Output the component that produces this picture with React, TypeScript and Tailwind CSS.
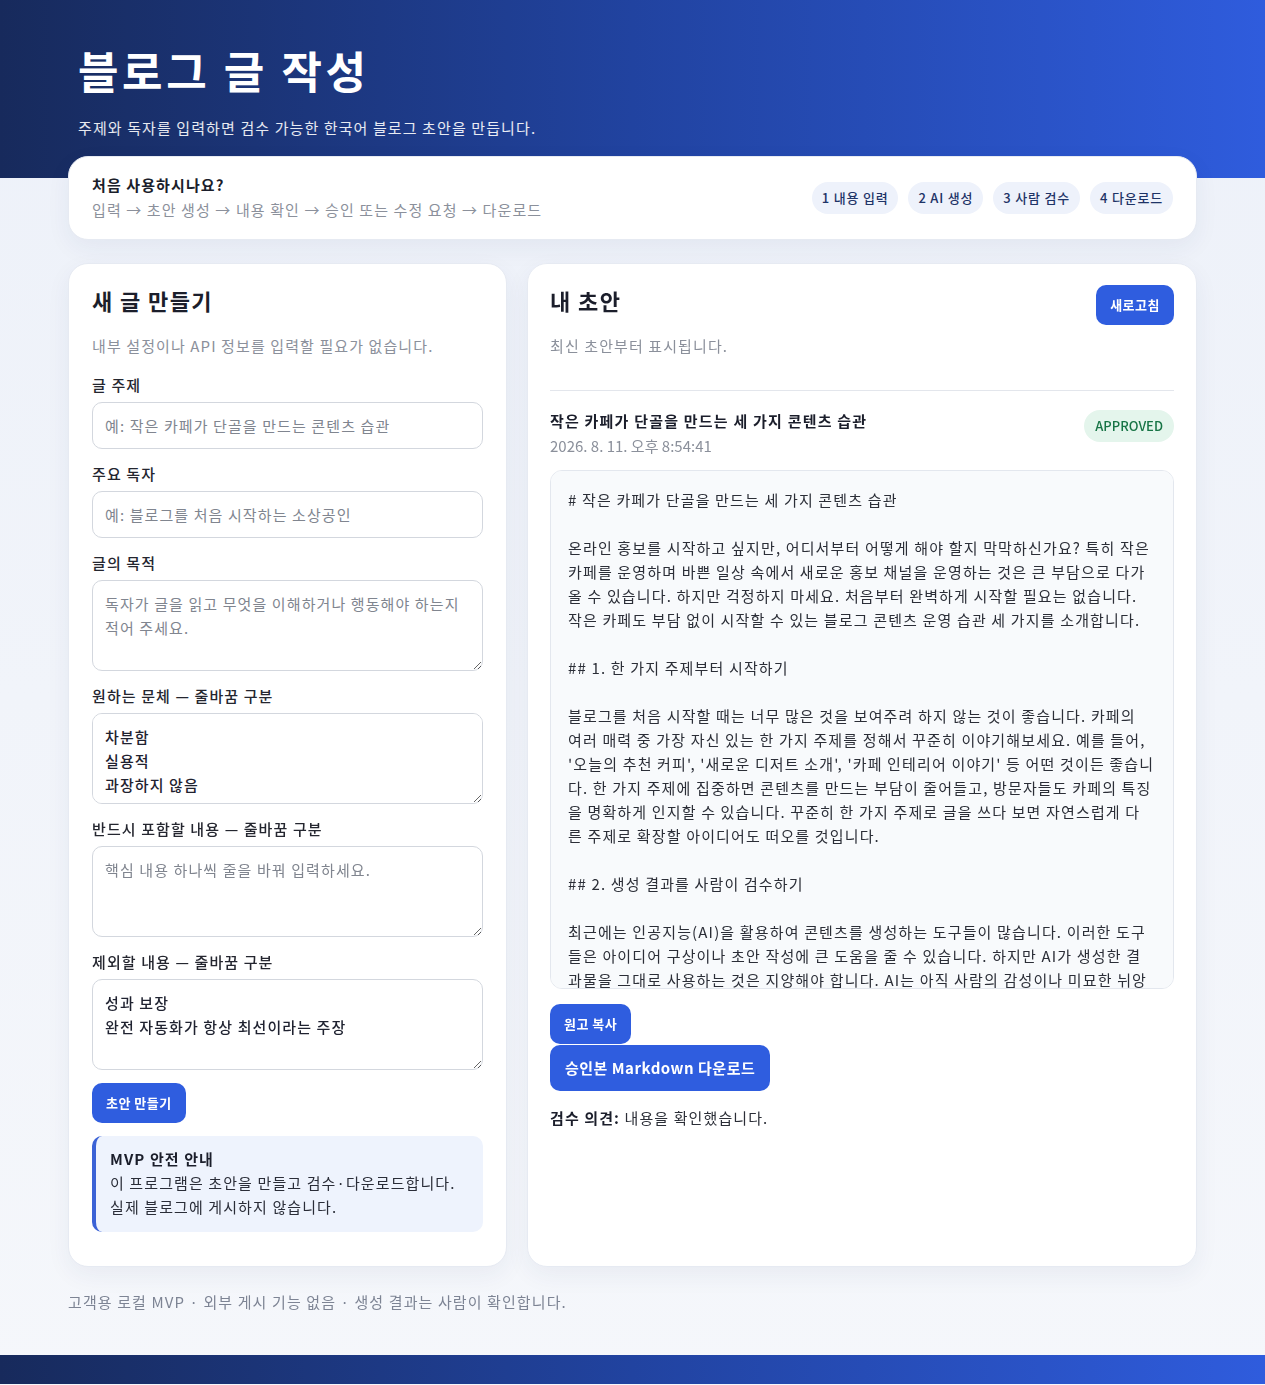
import React from 'react';

// 미리보기 박스는 원본과 같은 줄바꿈을 유지하기 위해 줄 단위로 적어둔다
const draftLines = [
  '# 작은 카페가 단골을 만드는 세 가지 콘텐츠 습관',
  '',
  '온라인 홍보를 시작하고 싶지만, 어디서부터 어떻게 해야 할지 막막하신가요? 특히 작은',
  '카페를 운영하며 바쁜 일상 속에서 새로운 홍보 채널을 운영하는 것은 큰 부담으로 다가',
  '올 수 있습니다. 하지만 걱정하지 마세요. 처음부터 완벽하게 시작할 필요는 없습니다.',
  '작은 카페도 부담 없이 시작할 수 있는 블로그 콘텐츠 운영 습관 세 가지를 소개합니다.',
  '',
  '## 1. 한 가지 주제부터 시작하기',
  '',
  '블로그를 처음 시작할 때는 너무 많은 것을 보여주려 하지 않는 것이 좋습니다. 카페의',
  '여러 매력 중 가장 자신 있는 한 가지 주제를 정해서 꾸준히 이야기해보세요. 예를 들어,',
  "'오늘의 추천 커피', '새로운 디저트 소개', '카페 인테리어 이야기' 등 어떤 것이든 좋습니",
  '다. 한 가지 주제에 집중하면 콘텐츠를 만드는 부담이 줄어들고, 방문자들도 카페의 특징',
  '을 명확하게 인지할 수 있습니다. 꾸준히 한 가지 주제로 글을 쓰다 보면 자연스럽게 다',
  '른 주제로 확장할 아이디어도 떠오를 것입니다.',
  '',
  '## 2. 생성 결과를 사람이 검수하기',
  '',
  '최근에는 인공지능(AI)을 활용하여 콘텐츠를 생성하는 도구들이 많습니다. 이러한 도구',
  '들은 아이디어 구상이나 초안 작성에 큰 도움을 줄 수 있습니다. 하지만 AI가 생성한 결',
  '과물을 그대로 사용하는 것은 지양해야 합니다. AI는 아직 사람의 감성이나 미묘한 뉘앙',
  '스를 완벽하게 이해하지 못하기 때문에, 사장님의 목소리로 한 번 더 다듬어 주세요.',
];

const steps = ['1 내용 입력', '2 AI 생성', '3 사람 검수', '4 다운로드'];

function Field({ label, children }: { label: string; children: React.ReactNode }) {
  return (
    <label className="block">
      <span className="block text-[15px] leading-[20px] font-medium text-[#24262f] mb-[7px]">{label}</span>
      {children}
    </label>
  );
}

const inputCls =
  'block w-full h-[47px] px-[12px] rounded-[10px] border border-[#d3d7de] bg-white text-[15px] text-[#1f2230] placeholder:text-[#80858f] outline-none';
const areaCls =
  'block w-full h-[91px] px-[12px] py-[11px] rounded-[10px] border border-[#d3d7de] bg-white text-[15px] leading-[24px] text-[#1f2230] placeholder:text-[#80858f] outline-none';

const cardCls = 'bg-white rounded-[20px] border border-[#e6eaf2] shadow-[0_8px_24px_rgba(30,50,110,0.06)]';
const btnCls = 'rounded-[10px] bg-[#2f5ddf] text-white font-bold tracking-[0.5px]';

export default function App() {
  return (
    <div
      className="min-h-[1385px] bg-gradient-to-b from-[#edf1f9] to-[#f5f7fb] text-[#1f2230] tracking-[1.1px]"
      style={{ fontFamily: '"Noto Sans CJK KR", "Noto Sans", sans-serif' }}
    >
      {/* 상단 헤더 */}
      <header className="h-[178px] bg-gradient-to-r from-[#172a5c] via-[#2143a0] to-[#2f5cdd]">
        <div className="w-[1129px] mx-auto pl-[10px] pt-[42px]">
          <h1 className="text-[44px] leading-[56px] font-bold text-white tracking-[3.6px]">블로그 글 작성</h1>
          <p className="mt-[19px] text-[15px] leading-[22px] text-white/90">
            주제와 독자를 입력하면 검수 가능한 한국어 블로그 초안을 만듭니다.
          </p>
        </div>
      </header>

      <main className="w-[1129px] mx-auto -mt-[22px]">
        {/* 안내 카드 */}
        <section className={`${cardCls} h-[84px] px-[23px] flex items-center justify-between`}>
          <div className="-mt-[1px]">
            <p className="text-[15px] leading-[22px] font-bold text-[#1b1e2b]">처음 사용하시나요?</p>
            <p className="mt-[3px] text-[15px] leading-[22px] text-[#8b909b]">
              입력 → 초안 생성 → 내용 확인 → 승인 또는 수정 요청 → 다운로드
            </p>
          </div>
          <div className="flex gap-[10px]">
            {steps.map((s) => (
              <span
                key={s}
                className="h-[32px] px-[10px] flex items-center rounded-full bg-[#eef2fb] text-[13px] font-medium text-[#1e3467] tracking-[0.8px]"
              >
                {s}
              </span>
            ))}
          </div>
        </section>

        <div className="mt-[23px] grid grid-cols-[439px_1fr] gap-[20px]">
          {/* 새 글 만들기 */}
          <section className={`${cardCls} px-[23px] pt-[21px] pb-[34px]`}>
            <h2 className="text-[22px] leading-[30px] font-bold text-[#1b1e2b] tracking-[1.4px]">새 글 만들기</h2>
            <p className="mt-[21px] text-[15px] leading-[20px] text-[#8b909b]">
              내부 설정이나 API 정보를 입력할 필요가 없습니다.
            </p>
            <div className="mt-[19px] flex flex-col gap-[15px]">
              <Field label="글 주제">
                <input className={inputCls} placeholder="예: 작은 카페가 단골을 만드는 콘텐츠 습관" />
              </Field>
              <Field label="주요 독자">
                <input className={inputCls} placeholder="예: 블로그를 처음 시작하는 소상공인" />
              </Field>
              <Field label="글의 목적">
                <textarea className={areaCls} placeholder="독자가 글을 읽고 무엇을 이해하거나 행동해야 하는지 적어 주세요." />
              </Field>
              <Field label="원하는 문체 — 줄바꿈 구분">
                <textarea className={areaCls + ' font-medium'} defaultValue={'차분함\n실용적\n과장하지 않음'} />
              </Field>
              <Field label="반드시 포함할 내용 — 줄바꿈 구분">
                <textarea className={areaCls} placeholder="핵심 내용 하나씩 줄을 바꿔 입력하세요." />
              </Field>
              <Field label="제외할 내용 — 줄바꿈 구분">
                <textarea className={areaCls + ' font-medium'} defaultValue={'성과 보장\n완전 자동화가 항상 최선이라는 주장'} />
              </Field>
            </div>
            <button className={`${btnCls} mt-[13px] h-[40px] px-[14px] text-[13px]`}>초안 만들기</button>
            <div className="mt-[13px] rounded-[10px] border-l-4 border-[#3b62d6] bg-[#eef3fd] px-[14px] pt-[11px] pb-[13px] text-[15px] leading-[24px] text-[#2a2d38]">
              <p className="font-bold text-[#1b1e2b]">MVP 안전 안내</p>
              <p>이 프로그램은 초안을 만들고 검수·다운로드합니다.</p>
              <p>실제 블로그에 게시하지 않습니다.</p>
            </div>
          </section>

          {/* 내 초안 */}
          <section className={`${cardCls} px-[22px] pt-[21px] pb-[23px]`}>
            <div className="flex items-start justify-between">
              <h2 className="text-[22px] leading-[30px] font-bold text-[#1b1e2b] tracking-[1.4px]">내 초안</h2>
              <button className={`${btnCls} h-[40px] px-[14px] text-[13px]`}>새로고침</button>
            </div>
            <p className="mt-[11px] text-[15px] leading-[20px] text-[#8b909b]">최신 초안부터 표시됩니다.</p>
            <div className="mt-[34px] h-px bg-[#e3e6ec]" />

            <article className="mt-[19px]">
              <div className="flex items-start justify-between">
                <div>
                  <h3 className="text-[15px] leading-[22px] font-bold text-[#1b1e2b] tracking-[1.2px]">
                    작은 카페가 단골을 만드는 세 가지 콘텐츠 습관
                  </h3>
                  <p className="mt-[4px] text-[15px] leading-[20px] text-[#8b909b] tracking-normal">2026. 8. 11. 오후 8:54:41</p>
                </div>
                <span className="h-[32px] px-[11px] flex items-center rounded-full bg-[#e4f5ec] text-[13px] font-medium text-[#177445] tracking-normal">
                  APPROVED
                </span>
              </div>
              <div className="mt-[14px] h-[519px] overflow-y-auto [scrollbar-width:none] rounded-[12px] border border-[#e3e7ee] bg-[#f8fafc] px-[17px] py-[17px]">
                <p className="whitespace-pre text-[15px] leading-[24px] text-[#2b2e37] tracking-[1.15px]">
                  {draftLines.join('\n')}
                </p>
              </div>

              <div className="mt-[15px] flex flex-col items-start">
                <button className={`${btnCls} h-[40px] px-[14px] text-[13px]`}>원고 복사</button>
                <button className={`${btnCls} mt-px h-[46px] px-[15px] text-[15px]`}>승인본 Markdown 다운로드</button>
              </div>
              <p className="mt-[15px] text-[15px] leading-[24px] text-[#2b2e37]">
                <span className="font-bold text-[#1b1e2b]">검수 의견:</span> 내용을 확인했습니다.
              </p>
            </article>
          </section>
        </div>

        <p className="mt-[25px] text-[15px] leading-[20px] text-[#7d8494]">
          고객용 로컬 MVP · 외부 게시 기능 없음 · 생성 결과는 사람이 확인합니다.
        </p>
      </main>

      <div className="mt-[43px] h-[29px] bg-gradient-to-r from-[#172a5c] via-[#2143a0] to-[#2f5cdd]" />
    </div>
  );
}
